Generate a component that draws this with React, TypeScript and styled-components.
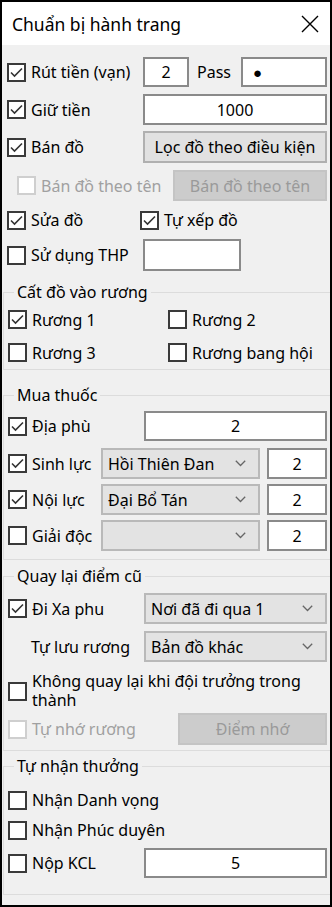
import React from "react";
import styled, { createGlobalStyle } from "styled-components";

const Global = createGlobalStyle`
  html, body { margin: 0; padding: 0; background: #fff; }
  * { box-sizing: border-box; }
`;

const FONT = `"Noto Sans", "Liberation Sans", sans-serif`;

const Window = styled.div`
  width: 332px;
  height: 907px;
  border: 2px solid #000;
  background: #f0f0f0;
  display: flex;
  flex-direction: column;
  font-family: ${FONT};
  font-size: 16px;
  color: #000;
  overflow: hidden;
`;

const TitleBar = styled.div`
  height: 43px;
  background: #fff;
  display: flex;
  align-items: center;
  justify-content: space-between;
  padding: 0 10px 0 10px;
  flex-shrink: 0;
`;

const Title = styled.span`
  font-size: 17.5px;
  color: #000;
`;

const CloseBtn = styled.div`
  width: 20px;
  height: 20px;
  display: flex;
  align-items: center;
  justify-content: center;
`;

const Body = styled.div`
  padding: 0 3px 0 5px;
  display: flex;
  flex-direction: column;
`;

const Row = styled.div<{ $mt: number; $h: number; $cols?: string }>`
  display: grid;
  grid-template-columns: ${(p) => p.$cols ?? "136px 1fr"};
  align-items: center;
  margin-top: ${(p) => p.$mt}px;
  height: ${(p) => p.$h}px;
`;

const Controls = styled.div<{ $cols: string; $gap?: number }>`
  display: grid;
  grid-template-columns: ${(p) => p.$cols};
  column-gap: ${(p) => p.$gap ?? 0}px;
  align-items: center;
  height: 100%;
`;

const CheckWrap = styled.label<{ $disabled?: boolean; $indent?: number }>`
  display: flex;
  align-items: center;
  gap: 5px;
  padding-left: ${(p) => p.$indent ?? 0}px;
  color: ${(p) => (p.$disabled ? "#a0a0a0" : "#000")};
  white-space: nowrap;
`;

const Box = styled.span<{ $disabled?: boolean }>`
  width: 19px;
  height: 19px;
  flex-shrink: 0;
  border: 2px solid ${(p) => (p.$disabled ? "#cfcfcf" : "#3a3a3a")};
  background: #fff;
  display: flex;
  align-items: center;
  justify-content: center;
`;

const MultiText = styled.span`
  white-space: normal;
  line-height: 19px;
`;

const PlainLabel = styled.span<{ $indent?: number }>`
  padding-left: ${(p) => p.$indent ?? 0}px;
`;

const TextBox = styled.input<{ $align?: string; $pl?: number; $fs?: number }>`
  height: 100%;
  width: 100%;
  border: 2px solid #8a8a8a;
  background: #fff;
  font-family: ${FONT};
  font-size: ${(p) => p.$fs ?? 16}px;
  color: #000;
  text-align: ${(p) => p.$align ?? "center"};
  padding: 0 0 0 ${(p) => p.$pl ?? 0}px;
  margin: 0;
  outline: none;
`;

const Button = styled.div<{ $disabled?: boolean }>`
  height: 100%;
  border: 2px solid ${(p) => (p.$disabled ? "#c4c4c4" : "#b0b0b0")};
  background: ${(p) => (p.$disabled ? "#cccccc" : "#e1e1e1")};
  color: ${(p) => (p.$disabled ? "#9a9a9a" : "#000")};
  display: flex;
  align-items: center;
  justify-content: center;
`;

const Select = styled.div`
  height: 100%;
  border: 2px solid #b9b9b9;
  background: #e3e3e3;
  display: flex;
  align-items: center;
  justify-content: space-between;
  padding: 0 12px 0 5px;
`;

const PassLabel = styled.span`
  padding-left: 8px;
`;

const Group = styled.fieldset<{ $mt: number; $pb: number }>`
  margin: ${(p) => p.$mt}px -4px 0 -4px;
  padding: 0 3px ${(p) => p.$pb}px 4px;
  border: 1px solid #dcdcdc;
  min-width: 0;
`;

const Legend = styled.legend`
  margin-left: 6px;
  padding: 0 3px;
  font-size: 16px;
  line-height: 20px;
  color: #000;
`;

const Check = () => (
  <svg width="13" height="11" viewBox="0 0 13 11">
    <polyline points="1,5.5 4.5,9 12,1.5" fill="none" stroke="#333" strokeWidth="1.6" />
  </svg>
);

const Chevron = () => (
  <svg width="11" height="7" viewBox="0 0 11 7">
    <polyline points="0.8,0.8 5.5,5.5 10.2,0.8" fill="none" stroke="#666" strokeWidth="1.3" />
  </svg>
);

const CheckBox: React.FC<{
  label: React.ReactNode;
  checked?: boolean;
  disabled?: boolean;
  indent?: number;
}> = ({ label, checked, disabled, indent }) => (
  <CheckWrap $disabled={disabled} $indent={indent}>
    <Box $disabled={disabled}>{checked && <Check />}</Box>
    {label}
  </CheckWrap>
);

const Drop: React.FC<{ value?: string }> = ({ value }) => (
  <Select>
    <span>{value ?? ""}</span>
    <Chevron />
  </Select>
);

export default function App() {
  return (
    <>
      <Global />
      <Window>
        <TitleBar>
          <Title>Chuẩn bị hành trang</Title>
          <CloseBtn>
            <svg width="18" height="18" viewBox="0 0 18 18">
              <path d="M1 1 L17 17 M17 1 L1 17" stroke="#000" strokeWidth="1.4" />
            </svg>
          </CloseBtn>
        </TitleBar>
        <Body>
          <Row $mt={12} $h={30}>
            <CheckBox checked label="Rút tiền (vạn)" />
            <Controls $cols="46px 52px 1fr">
              <TextBox readOnly value="2" />
              <PassLabel>Pass</PassLabel>
              <TextBox readOnly value="●" $align="left" $pl={10} $fs={15} />
            </Controls>
          </Row>
          <Row $mt={7} $h={31}>
            <CheckBox checked label="Giữ tiền" />
            <TextBox readOnly value="1000" />
          </Row>
          <Row $mt={6} $h={32}>
            <CheckBox checked label="Bán đồ" />
            <Button>Lọc đồ theo điều kiện</Button>
          </Row>
          <Row $mt={7} $h={31} $cols="166px 1fr">
            <CheckBox disabled indent={10} label="Bán đồ theo tên" />
            <Button $disabled>Bán đồ theo tên</Button>
          </Row>
          <Row $mt={5} $h={28} $cols="133px 1fr">
            <CheckBox checked label="Sửa đồ" />
            <CheckBox checked label="Tự xếp đồ" />
          </Row>
          <Row $mt={5} $h={32}>
            <CheckBox label="Sử dụng THP" />
            <Controls $cols="98px 1fr">
              <TextBox readOnly value="" />
            </Controls>
          </Row>

          <Group $mt={11} $pb={1}>
            <Legend>Cất đồ vào rương</Legend>
            <Row $mt={2} $h={31} $cols="160px 1fr">
              <CheckBox checked label="Rương 1" />
              <CheckBox label="Rương 2" />
            </Row>
            <Row $mt={2} $h={31} $cols="160px 1fr">
              <CheckBox label="Rương 3" />
              <CheckBox label="Rương bang hội" />
            </Row>
          </Group>

          <Group $mt={15} $pb={8}>
            <Legend>Mua thuốc</Legend>
            <Row $mt={6} $h={30}>
              <CheckBox checked label="Địa phù" />
              <TextBox readOnly value="2" />
            </Row>
            <Row $mt={7} $h={31} $cols="93px 1fr">
              <CheckBox checked label="Sinh lực" />
              <Controls $cols="159px 1fr" $gap={7}>
                <Drop value="Hồi Thiên Đan" />
                <TextBox readOnly value="2" />
              </Controls>
            </Row>
            <Row $mt={5} $h={31} $cols="93px 1fr">
              <CheckBox checked label="Nội lực" />
              <Controls $cols="159px 1fr" $gap={7}>
                <Drop value="Đại Bổ Tán" />
                <TextBox readOnly value="2" />
              </Controls>
            </Row>
            <Row $mt={5} $h={31} $cols="93px 1fr">
              <CheckBox label="Giải độc" />
              <Controls $cols="159px 1fr" $gap={7}>
                <Drop />
                <TextBox readOnly value="2" />
              </Controls>
            </Row>
          </Group>

          <Group $mt={6} $pb={5}>
            <Legend>Quay lại điểm cũ</Legend>
            <Row $mt={7} $h={31}>
              <CheckBox checked label="Đi Xa phu" />
              <Drop value="Nơi đã đi qua 1" />
            </Row>
            <Row $mt={7} $h={31}>
              <PlainLabel $indent={23}>Tự lưu rương</PlainLabel>
              <Drop value="Bản đồ khác" />
            </Row>
            <Row $mt={9} $h={40} $cols="1fr">
              <CheckBox
                label={<MultiText>Không quay lại khi đội trưởng trong thành</MultiText>}
              />
            </Row>
            <Row $mt={2} $h={32} $cols="170px 1fr">
              <CheckBox disabled label="Tự nhớ rương" />
              <Button $disabled>Điểm nhớ</Button>
            </Row>
          </Group>

          <Group $mt={5} $pb={16}>
            <Legend>Tự nhận thưởng</Legend>
            <Row $mt={9} $h={30} $cols="1fr">
              <CheckBox label="Nhận Danh vọng" />
            </Row>
            <Row $mt={0} $h={30} $cols="1fr">
              <CheckBox label="Nhận Phúc duyên" />
            </Row>
            <Row $mt={3} $h={30}>
              <CheckBox label="Nộp KCL" />
              <TextBox readOnly value="5" />
            </Row>
          </Group>
        </Body>
      </Window>
    </>
  );
}
